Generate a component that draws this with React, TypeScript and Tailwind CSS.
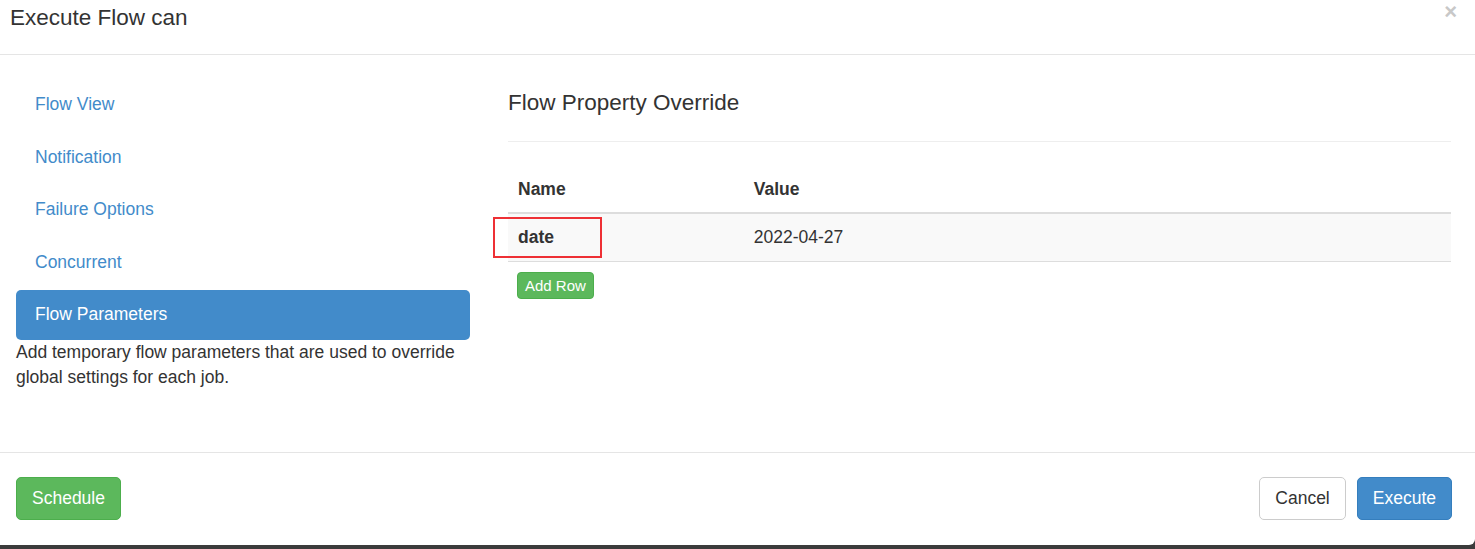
import React from "react";

const navItems = ["Flow View", "Notification", "Failure Options", "Concurrent"];

export default function App() {
  return (
    <div
      className="w-[1475px] h-[549px] bg-[#3b3b3b] overflow-hidden text-[#333]"
      style={{ fontFamily: '"Liberation Sans", Arial, Helvetica, sans-serif' }}
    >
      <div className="bg-white h-[545px] rounded-br-[6px] flex flex-col">
        {/* Header */}
        <div className="h-[55px] border-b border-[#e5e5e5] flex justify-between items-start pl-[10px] pr-[18px]">
          <h4 className="pt-[5px] text-[22.5px] leading-[26px] text-[#333]">Execute Flow can</h4>
          <span className="mt-[1px] text-[22px] font-bold leading-[22px] text-[#c8c8c8]">×</span>
        </div>

        {/* Body */}
        <div className="flex pl-[16px] pr-[24px] pt-[24.5px] h-[397px] gap-[38px]">
          <div className="w-[454px] shrink-0">
            <ul className="flex flex-col gap-[2.5px]">
              {navItems.map((n) => (
                <li key={n} className="h-[50px] flex items-center pl-[19px] text-[17.5px] text-[#428bca]">
                  {n}
                </li>
              ))}
              <li className="h-[50px] flex items-center pl-[19px] text-[17.5px] text-white bg-[#428bca] rounded-[5px]">
                Flow Parameters
              </li>
            </ul>
            <p className="text-[17.5px] leading-[25px] text-[#333]">
              Add temporary flow parameters that are used to override global settings for each job.
            </p>
          </div>

          <div className="flex-1">
            <h4 className="mt-[10.5px] text-[22.5px] leading-[26px] text-[#333]">Flow Property Override</h4>
            <div className="mt-[25px] border-t border-[#eeeeee]" />
            <div className="relative mt-[25px]">
              <table className="w-full text-[17.5px] border-collapse">
                <thead>
                  <tr className="border-b-2 border-[#dddddd]">
                    <th className="w-1/4 text-left font-bold px-[10px] py-[10px] leading-[25px]">Name</th>
                    <th className="text-left font-bold px-[10px] py-[10px] leading-[25px]">Value</th>
                  </tr>
                </thead>
                <tbody>
                  <tr className="bg-[#f9f9f9] border-b border-[#dddddd]">
                    <td className="px-[10px] py-[11px] leading-[25px] font-bold">date</td>
                    <td className="px-[10px] py-[11px] leading-[25px]">2022-04-27</td>
                  </tr>
                </tbody>
              </table>
              <div className="absolute left-[-15px] top-[50px] w-[109px] h-[41px] border-2 border-[#ee3035]" />
              <button className="mt-[10px] ml-[9px] h-[27px] px-[7px] text-[15px] leading-[20px] text-white bg-[#5cb85c] border border-[#4cae4c] rounded-[4px]">
                Add Row
              </button>
            </div>
          </div>
        </div>

        {/* Footer */}
        <div className="border-t border-[#e5e5e5] flex justify-between items-start pl-[16px] pr-[23px] pt-[24px]">
          <button className="h-[43px] px-[15px] text-[17.5px] leading-[25px] text-white bg-[#5cb85c] border border-[#4cae4c] rounded-[5px]">
            Schedule
          </button>
          <div className="flex gap-[11px]">
            <button className="h-[43px] px-[15px] text-[17.5px] leading-[25px] text-[#333] bg-white border border-[#cccccc] rounded-[5px]">
              Cancel
            </button>
            <button className="h-[43px] px-[15px] text-[17.5px] leading-[25px] text-white bg-[#428bca] border border-[#357ebd] rounded-[5px]">
              Execute
            </button>
          </div>
        </div>
      </div>
    </div>
  );
}
